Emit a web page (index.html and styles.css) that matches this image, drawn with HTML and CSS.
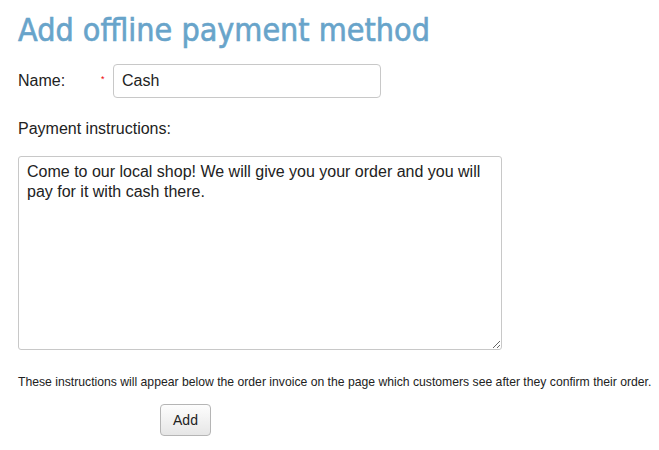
FILE: index.html
```html
<!DOCTYPE html>
<html>
<head>
<meta charset="utf-8">
<link rel="stylesheet" href="styles.css">
</head>
<body>
<div class="page">
  <h1 class="title">Add offline payment method</h1>
  <form class="form">
    <div class="row-name">
      <label class="label">Name:</label>
      <span class="req">*</span>
      <input class="input" type="text" value="Cash">
    </div>
    <div class="label-block">Payment instructions:</div>
    <textarea class="textarea">Come to our local shop! We will give you your order and you will pay for it with cash there.</textarea>
    <p class="hint">These instructions will appear below the order invoice on the page which customers see after they confirm their order.</p>
    <div class="actions">
      <button type="button" class="btn">Add</button>
    </div>
  </form>
</div>
</body>
</html>
```

FILE: styles.css
```css
html, body {
  margin: 0;
  padding: 0;
  background: #fff;
}
.page {
  padding: 10px 18px 0 18px;
  font-family: "Liberation Sans", Arial, sans-serif;
  color: #222;
}
.title {
  margin: 0;
  font-family: "DejaVu Sans Condensed", "DejaVu Sans", sans-serif;
  font-weight: normal;
  font-size: 32px;
  line-height: 40px;
  color: #68a4ca;
  -webkit-text-stroke: 0.6px #68a4ca;
}
.form {
  display: flex;
  flex-direction: column;
  margin-top: 14px;
}
.row-name {
  display: flex;
  align-items: center;
  height: 34px;
}
.label {
  font-size: 16px;
  width: 83px;
}
.req {
  color: #e00;
  font-size: 9px;
  width: 12px;
  position: relative;
  top: -2px;
}
.input {
  box-sizing: border-box;
  width: 268px;
  height: 34px;
  border: 1px solid #c8c8c8;
  border-radius: 4px;
  padding: 0 8px;
  font-family: "Liberation Sans", Arial, sans-serif;
  font-size: 16px;
  color: #222;
  margin: 0;
}
.label-block {
  font-size: 16px;
  margin-top: 21px;
  line-height: 20px;
}
.textarea {
  box-sizing: border-box;
  width: 484px;
  height: 194px;
  margin: 17px 0 0 0;
  border: 1px solid #c8c8c8;
  border-radius: 3px;
  padding: 5px 8px;
  font-family: "Liberation Sans", Arial, sans-serif;
  font-size: 16px;
  line-height: 20px;
  color: #222;
  resize: both;
}
.hint {
  margin: 24px 0 0 0;
  font-size: 12.2px;
  line-height: 16px;
  color: #222;
  white-space: nowrap;
}
.actions {
  display: flex;
  padding-left: 142px;
  margin-top: 14px;
}
.btn {
  width: 51px;
  height: 32px;
  border: 1px solid #b5b5b5;
  border-radius: 4px;
  background: linear-gradient(#fdfdfd, #e6e6e6);
  font-family: "Liberation Sans", Arial, sans-serif;
  font-size: 14px;
  color: #222;
  padding: 0;
}
```
